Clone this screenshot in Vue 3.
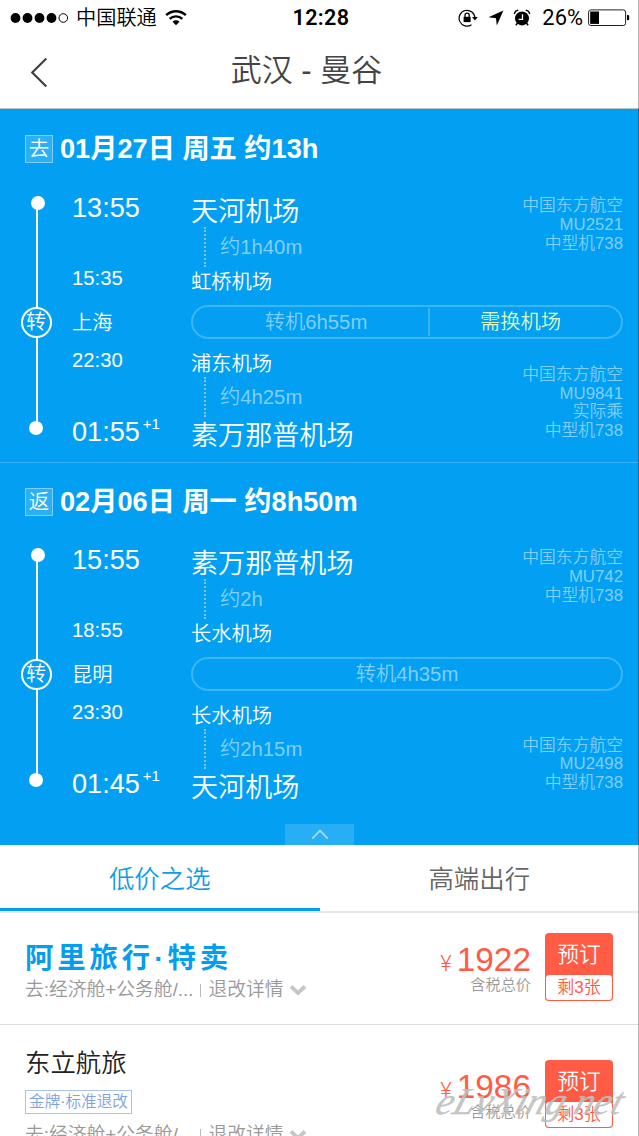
<script setup>
import { ref } from "vue";

const legs = [
  {
    tag: "去",
    title: "01月27日 周五 约13h",
    transfer: { city: "上海", wait: "转机6h55m", notice: "需换机场" },
    first: {
      start: "13:55",
      from: "天河机场",
      duration: "约1h40m",
      end: "15:35",
      to: "虹桥机场",
      info: ["中国东方航空", "MU2521", "中型机738"],
    },
    second: {
      start: "22:30",
      from: "浦东机场",
      duration: "约4h25m",
      end: "01:55",
      to: "素万那普机场",
      info: ["中国东方航空", "MU9841", "实际乘", "中型机738"],
    },
  },
  {
    tag: "返",
    title: "02月06日 周一 约8h50m",
    transfer: { city: "昆明", wait: "转机4h35m", notice: "" },
    first: {
      start: "15:55",
      from: "素万那普机场",
      duration: "约2h",
      end: "18:55",
      to: "长水机场",
      info: ["中国东方航空", "MU742", "中型机738"],
    },
    second: {
      start: "23:30",
      from: "长水机场",
      duration: "约2h15m",
      end: "01:45",
      to: "天河机场",
      info: ["中国东方航空", "MU2498", "中型机738"],
    },
  },
];

const tabs = ["低价之选", "高端出行"];
const activeTab = ref(0);

const offers = [
  { name: "阿里旅行·特卖", brand: true, label: "", price: 1922 },
  { name: "东立航旅", brand: false, label: "金牌·标准退改", price: 1986 },
];
</script>

<template>
  <div class="page">
    <header class="status-bar">
      <div class="status-left">
        <svg class="signal" viewBox="0 0 58 12" aria-hidden="true">
          <circle cx="5.5" cy="6" r="4.9" />
          <circle cx="17.5" cy="6" r="4.9" />
          <circle cx="29.5" cy="6" r="4.9" />
          <circle cx="41.5" cy="6" r="4.9" />
          <circle cx="53.3" cy="6" r="4.3" fill="none" stroke="#000" stroke-width="1" />
        </svg>
        <span class="carrier">中国联通</span>
        <svg class="wifi" viewBox="0 0 22 17" fill="none" aria-hidden="true">
          <path d="M1.2 6.2a14 14 0 0 1 19.6 0" stroke="#000" stroke-width="2.4" />
          <path d="M4.7 9.9a9 9 0 0 1 12.6 0" stroke="#000" stroke-width="2.4" />
          <path d="M7.5 12.8a5 5 0 0 1 7 0L11 16.3z" fill="#000" />
        </svg>
      </div>
      <span class="clock">12:28</span>
      <div class="status-right">
        <svg class="lock" viewBox="0 0 20 18" fill="none" aria-hidden="true">
          <path d="M13.5 15.7A7.9 7.9 0 1 1 16.9 9" stroke="#000" stroke-width="1.2" />
          <path d="M14 8h5.8L17 11.4z" fill="#000" />
          <rect x="5.6" y="7.8" width="7" height="5.3" fill="#000" />
          <path d="M7 8V6.2a2.1 2.1 0 0 1 4.2 0V8" stroke="#000" stroke-width="1.3" />
        </svg>
        <svg class="arrow" viewBox="0 0 16 16" aria-hidden="true">
          <path d="M15.4.5 8.8 15.5 8 8.2.5 7.3z" />
        </svg>
        <svg class="alarm" viewBox="0 0 18 18" fill="none" aria-hidden="true">
          <circle cx="9" cy="9.4" r="7" fill="#000" />
          <path d="M1.2 5A5 5 0 0 1 5.3 1.2M16.8 5a5 5 0 0 0-4.1-3.8" stroke="#000" stroke-width="1.3" />
          <path d="m4.5 14-1.6 2.3M13.5 14l1.6 2.3" stroke="#000" stroke-width="1.5" />
          <path d="M9.5 5.3v5H5.6" stroke="#fff" stroke-width="1.3" />
        </svg>
        <span class="percent">26%</span>
        <svg class="battery" viewBox="0 0 42 18" fill="none" aria-hidden="true">
          <rect x=".6" y=".9" width="37" height="15.6" rx="2.2" stroke="#222" stroke-width="1" />
          <rect x="2.2" y="2.5" width="8.8" height="12.4" fill="#000" />
          <path d="M39 6h.8a1.4 1.4 0 0 1 1.4 1.4v2.5a1.4 1.4 0 0 1-1.4 1.4H39z" fill="#000" />
        </svg>
      </div>
    </header>

    <nav class="nav-bar">
      <svg class="back" viewBox="0 0 18 31" fill="none" aria-hidden="true">
        <path d="M16.3 1.5 2.2 15.5l14.1 14" stroke="#3d3d3d" stroke-width="2.1" />
      </svg>
      <h1 class="nav-title">武汉 - 曼谷</h1>
    </nav>

    <main class="trip">
      <section v-for="leg in legs" :key="leg.tag" class="leg">
        <h2 class="leg-title">
          <span class="leg-tag">{{ leg.tag }}</span>
          <span>{{ leg.title }}</span>
        </h2>
        <div class="leg-body">
          <div class="rail">
            <i class="dot first"></i>
            <i class="line"></i>
            <span class="stop">转</span>
            <i class="line"></i>
            <i class="dot"></i>
          </div>
          <div class="route">
            <div class="flight">
              <div class="row big">
                <span class="time">{{ leg.first.start }}</span>
                <span>{{ leg.first.from }}</span>
              </div>
              <div class="duration">{{ leg.first.duration }}</div>
              <div class="row">
                <span class="time">{{ leg.first.end }}</span>
                <span>{{ leg.first.to }}</span>
              </div>
              <div class="info">
                <span v-for="line in leg.first.info" :key="line">{{ line }}</span>
              </div>
            </div>

            <div class="transfer">
              <span class="city">{{ leg.transfer.city }}</span>
              <div class="pill">
                <span class="wait">{{ leg.transfer.wait }}</span>
                <span v-if="leg.transfer.notice" class="notice">{{ leg.transfer.notice }}</span>
              </div>
            </div>

            <div class="flight">
              <div class="row">
                <span class="time">{{ leg.second.start }}</span>
                <span>{{ leg.second.from }}</span>
              </div>
              <div class="duration">{{ leg.second.duration }}</div>
              <div class="row big last">
                <span class="time">{{ leg.second.end }}<sup>+1</sup></span>
                <span>{{ leg.second.to }}</span>
              </div>
              <div class="info bottom">
                <span v-for="line in leg.second.info" :key="line">{{ line }}</span>
              </div>
            </div>
          </div>
        </div>
      </section>
      <button class="collapse" type="button" aria-label="收起">
        <svg viewBox="0 0 18 11" fill="none" aria-hidden="true">
          <path d="m1.2 9.6 7.8-8 7.8 8" stroke="#9ddafa" stroke-width="2" />
        </svg>
      </button>
    </main>

    <div class="tabs">
      <button
        v-for="(tab, index) in tabs"
        :key="tab"
        type="button"
        class="tab"
        :class="{ active: index === activeTab }"
        @click="activeTab = index"
      >
        {{ tab }}
      </button>
    </div>

    <section class="offers">
      <article v-for="offer in offers" :key="offer.name" class="offer" :class="{ tall: !offer.brand }">
        <div class="offer-main">
          <h3 class="offer-name" :class="{ brand: offer.brand }">{{ offer.name }}</h3>
          <span v-if="offer.label" class="offer-label">{{ offer.label }}</span>
          <p class="offer-desc">
            <span>去:经济舱+公务舱/...</span>
            <i class="divider"></i>
            <span>退改详情</span>
            <svg class="chevron" viewBox="0 0 18 12" fill="none" aria-hidden="true">
              <path d="m2 2.5 7 6.5 7-6.5" stroke="#c6c6c6" stroke-width="3.8" />
            </svg>
          </p>
        </div>
        <div class="offer-price">
          <div class="amount"><span class="yen">¥</span>{{ offer.price }}</div>
          <div class="tax">含税总价</div>
        </div>
        <button class="book" type="button">
          <span class="book-top">预订</span>
          <span class="book-left">剩3张</span>
        </button>
      </article>
    </section>

    <div class="watermark">eLvXing.net</div>
  </div>
</template>

<style>
body {
  overflow: hidden;
}
</style>

<style scoped>
.page {
  position: relative;
  box-sizing: border-box;
  width: 639px;
  height: 1136px;
  overflow: hidden;
  background: #fff;
  color: #222;
  font-family: "Liberation Sans", "Noto Sans CJK SC", sans-serif;
  font-weight: 350;
}

/* thin shade along the right edge */
.page::after {
  content: "";
  position: absolute;
  inset: 0 0 0 auto;
  width: 1px;
  background: rgba(0, 0, 0, 0.3);
}

.page *,
.page *::before {
  box-sizing: border-box;
}

h1,
h2,
h3,
p {
  margin: 0;
  font-weight: inherit;
}

button {
  padding: 0;
  border: none;
  background: none;
  font: inherit;
}

svg {
  display: block;
  flex: none;
}

.status-bar {
  display: grid;
  grid-template-columns: 1fr auto 1fr;
  align-items: center;
  height: 36px;
  padding: 0 9px 1px 10px;
  color: #000;
}

.status-left,
.status-right {
  display: flex;
  align-items: center;
}

.status-right {
  justify-content: flex-end;
}

.signal {
  width: 58px;
  height: 12px;
}

.carrier {
  margin: 1px 8px 0 8px;
  font-size: 20.2px;
  line-height: 34px;
}

.wifi {
  width: 22px;
  height: 17px;
  margin-bottom: 1px;
}

.clock {
  padding-left: 2px;
  font-family: Roboto, "Liberation Sans", sans-serif;
  font-size: 21.5px;
  font-weight: 600;
  letter-spacing: 0.4px;
}

.lock {
  width: 20px;
  height: 18px;
}

.arrow {
  width: 16px;
  height: 16px;
  margin-left: 10px;
}

.alarm {
  width: 18px;
  height: 18px;
  margin-left: 9px;
}

.percent {
  margin: 0 5px 0 11px;
  font-family: Roboto, "Liberation Sans", sans-serif;
  font-size: 21.9px;
  font-weight: 400;
}

.battery {
  width: 42px;
  height: 18px;
}

.nav-bar {
  display: grid;
  grid-template-columns: 60px 1fr 84px;
  align-items: center;
  height: 73px;
  padding: 0 2px 3px 0;
  border-bottom: 1px solid #b5c5cd;
}

.back {
  width: 18px;
  height: 31px;
  margin: 3px 0 0 30px;
}

.nav-title {
  color: #444;
  font-size: 31px;
  line-height: 44px;
  text-align: center;
}

.trip {
  display: flex;
  flex-direction: column;
  height: 736px;
  background: #029ff2;
  color: #fff;
}

.leg {
  height: 353px;
  flex: none;
}

.leg + .leg {
  height: 362px;
  border-top: 1px solid #35b3f6;
}

.leg-title {
  display: flex;
  align-items: center;
  height: 80px;
  padding-left: 25px;
  font-size: 27.2px;
  font-weight: 700;
  line-height: 40px;
}

.leg + .leg .leg-title {
  height: 78px;
}

.leg-tag {
  width: 28px;
  height: 28px;
  margin: -1px 7px 0 0;
  border: 1px solid #80cff8;
  background: #2bb0f5;
  font-size: 20.5px;
  font-weight: 350;
  line-height: 25px;
  text-align: center;
}

.leg-body {
  display: flex;
  padding-top: 6px;
}

.rail {
  display: flex;
  flex-direction: column;
  align-items: center;
  width: 72px;
  height: 240px;
}

.dot {
  width: 14px;
  height: 14px;
  flex: none;
  border-radius: 50%;
  background: #fff;
}

.dot.first {
  margin-left: 3px;
  margin-top: 1px;
}

.line {
  width: 2px;
  flex: 1;
  margin-left: 1px;
  background: #fff;
}

.stop {
  width: 31px;
  height: 31px;
  flex: none;
  border: 2px solid #fff;
  border-radius: 50%;
  font-size: 20px;
  line-height: 27px;
  text-align: center;
}

.rail .line:nth-child(2) {
  flex: 0 0 97px;
}

.route {
  flex: 1;
  padding-right: 16px;
}

.flight {
  display: grid;
  grid-template-columns: 1fr 110px;
}

.row {
  display: grid;
  grid-template-columns: 119px 1fr;
  align-items: center;
  grid-column: 1;
  height: 28px;
  padding-top: 2px;
  font-size: 20.3px;
  line-height: 26px;
  white-space: nowrap;
}

.row.big {
  height: 32px;
  font-size: 27.1px;
  line-height: 30px;
}

.row.last {
  margin-top: 2px;
}

.time {
  margin-top: -8px;
}

.time sup {
  margin-left: 3px;
  font-size: 15px;
  line-height: 0;
  vertical-align: 12px;
}

.duration {
  grid-column: 1;
  height: 40px;
  margin-left: 132px;
  padding-left: 14px;
  border-left: 2px dotted #7accf8;
  color: #80cff8;
  font-size: 20.3px;
  line-height: 40px;
}

.info {
  display: flex;
  flex-direction: column;
  grid-column: 2;
  grid-row: 1 / 4;
  padding-top: 2px;
  color: #80cff8;
  font-size: 16.8px;
  line-height: 18.8px;
  text-align: right;
  white-space: nowrap;
}

.info.bottom {
  justify-content: flex-end;
  padding: 0 0 10px;
}

.transfer {
  display: grid;
  grid-template-columns: 119px 1fr;
  align-items: center;
  height: 34px;
  margin: 10px 0;
  font-size: 20.3px;
}

.city {
  margin-top: -2px;
}

.pill {
  display: flex;
  height: 34px;
  padding: 1px 0;
  border: 2px solid #3cb5f6;
  border-radius: 17px;
  line-height: 29px;
  text-align: center;
}

.wait {
  flex: 1;
  padding-left: 11px;
  color: #80cff8;
}

.wait:only-child {
  padding-left: 0;
}

.notice {
  width: 193px;
  padding-right: 10px;
  border-left: 2px solid #3cb5f6;
  color: #daf8bd;
}

.collapse {
  display: flex;
  align-items: center;
  justify-content: center;
  width: 69px;
  height: 21px;
  align-self: center;
  background: #28aef4;
}

.collapse svg {
  width: 18px;
  height: 11px;
}

.tabs {
  display: flex;
  height: 68px;
  border-bottom: 2px solid #e8e8e8;
}

.tab {
  flex: 1;
  height: 66px;
  border-bottom: 3px solid transparent;
  color: #666;
  font-size: 25.4px;
  line-height: 68px;
}

.tab.active {
  border-bottom-color: #029ff2;
  color: #139bea;
}

.offer {
  display: flex;
  align-items: flex-start;
  height: 112px;
  padding: 20px 26px 0 25px;
  border-bottom: 1px solid #ddd;
}

.offer.tall {
  height: 150px;
  padding-top: 35px;
}

.offer-main {
  flex: 1;
  padding-top: 6px;
}

.tall .offer-main {
  margin-top: -17px;
  padding-top: 0;
}

.offer-name {
  height: 38px;
  color: #222;
  font-size: 25.4px;
  line-height: 40px;
}

.offer-name.brand {
  color: #049df0;
  font-size: 28.4px;
  font-weight: 700;
  letter-spacing: 3.9px;
  line-height: 38px;
}

.offer-label {
  display: block;
  width: 107px;
  height: 24px;
  margin: 9px 0 8px;
  border: 1px solid #a9c3ee;
  color: #7da2e3;
  font-size: 15.6px;
  line-height: 22px;
  text-align: center;
  white-space: nowrap;
}

.offer-desc {
  display: flex;
  align-items: center;
  height: 26px;
  color: #999;
  font-size: 18.8px;
  line-height: 26px;
  white-space: nowrap;
}

.divider {
  width: 1px;
  height: 13px;
  margin: 0 8px 0 6px;
  background: #bbb;
}

.chevron {
  width: 18px;
  height: 12px;
  margin-left: 5px;
}

.offer-price {
  margin-right: 14px;
  padding-top: 10px;
  text-align: right;
}

.amount {
  height: 34px;
  color: #ff5b45;
  font-size: 33.4px;
  line-height: 34px;
}

.yen {
  margin-right: 5px;
  font-family: Roboto, "Liberation Sans", sans-serif;
  font-size: 22px;
  font-weight: 300;
}

.tax {
  color: #999;
  font-size: 15.2px;
  line-height: 16px;
}

.book {
  width: 68px;
  height: 68px;
  border-radius: 4px;
  background: #ff5b45;
}

.book-top {
  display: block;
  height: 41px;
  color: #fff;
  font-size: 21.8px;
  line-height: 43px;
}

.book-left {
  display: block;
  height: 27px;
  border: 1.5px solid #ff5b45;
  border-radius: 4px;
  background: #fff;
  color: #ff5b45;
  font-size: 17px;
  line-height: 25px;
}

.watermark {
  position: absolute;
  left: 438px;
  top: 1079px;
  color: rgba(190, 190, 190, 0.9);
  font-family: "Liberation Serif", serif;
  font-size: 38px;
  font-style: italic;
  font-weight: 400;
  letter-spacing: 0.3px;
  line-height: 44px;
  transform: skewX(-18deg);
  white-space: nowrap;
  -webkit-text-stroke: 0.5px rgba(190, 190, 190, 0.9);
}
</style>
